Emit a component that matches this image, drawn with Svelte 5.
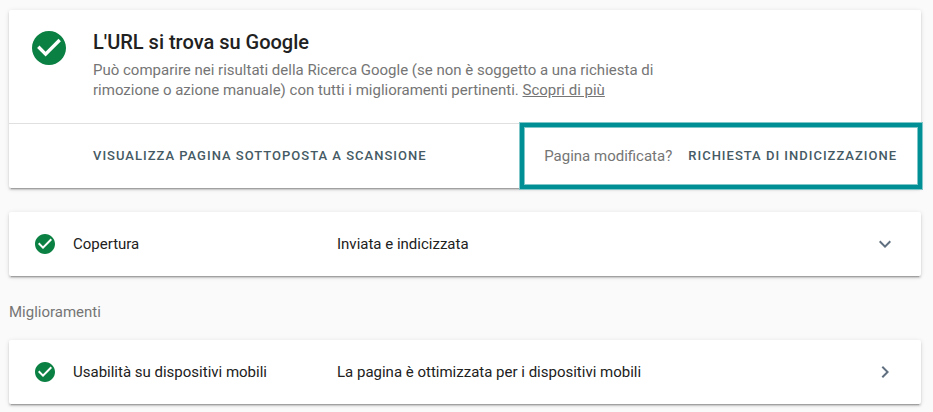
<script lang="ts">
	type Row = { name: string; status: string; open: string };

	const coverage: Row = {
		name: 'Copertura',
		status: 'Inviata e indicizzata',
		open: 'down'
	};
	const enhancements: Row[] = [
		{
			name: 'Usabilità su dispositivi mobili',
			status: 'La pagina è ottimizzata per i dispositivi mobili',
			open: 'right'
		}
	];
</script>

{#snippet check(size: string)}
	<svg class="check {size}" viewBox="2 2 20 20" aria-hidden="true">
		<path
			d="M12 2C6.48 2 2 6.48 2 12s4.48 10 10 10 10-4.48 10-10S17.52 2 12 2zm-2 15l-5-5 1.41-1.41L10 14.17l7.59-7.59L19 8l-9 9z"
		/>
	</svg>
{/snippet}

{#snippet row(item: Row)}
	<button type="button" class="card row">
		{@render check('small')}
		<span class="name">{item.name}</span>
		<span class="status">{item.status}</span>
		<svg class="chevron" viewBox="0 0 24 24" aria-hidden="true">
			{#if item.open === 'down'}
				<path d="M7.41 8.59L12 13.17l4.59-4.58L18 10l-6 6-6-6z" />
			{:else}
				<path d="M8.59 16.59L13.17 12 8.59 7.41 10 6l6 6-6 6z" />
			{/if}
		</svg>
	</button>
{/snippet}

<main>
	<section class="card">
		<div class="verdict">
			{@render check('large')}
			<div class="text">
				<h1>L'URL si trova su Google</h1>
				<p>
					Può comparire nei risultati della Ricerca Google (se non è soggetto a una richiesta di
					rimozione o azione manuale) con tutti i miglioramenti pertinenti.
					<a href="#more">Scopri di più</a>
				</p>
			</div>
		</div>
		<div class="actions">
			<button type="button" class="action">Visualizza pagina sottoposta a scansione</button>
			<div class="request">
				<span>Pagina modificata?</span>
				<button type="button" class="action">Richiesta di indicizzazione</button>
			</div>
		</div>
	</section>

	{@render row(coverage)}

	<h2>Miglioramenti</h2>
	{#each enhancements as item}
		{@render row(item)}
	{/each}
</main>

<style>
	:global(body) {
		background: #fafafa;
	}
	main {
		padding: 10px 12px 8px 9px;
		font-family: Roboto, sans-serif;
		font-size: 15px;
		line-height: 20px;
		color: #757575;
	}
	button {
		padding: 0;
		border: none;
		background: none;
		font: inherit;
		cursor: pointer;
	}
	.card {
		background: #fff;
		border-radius: 2px;
		box-shadow:
			0 2px 2px rgba(0, 0, 0, 0.14),
			0 3px 1px -2px rgba(0, 0, 0, 0.2),
			0 1px 5px rgba(0, 0, 0, 0.12);
	}
	.verdict {
		display: flex;
		align-items: flex-start;
		gap: 27px;
		padding: 20px 24px 23px 23px;
		border-bottom: 1px solid #e0e0e0;
	}
	.text {
		max-width: 580px;
	}
	h1 {
		margin: 0 0 6px;
		font-size: 20px;
		font-weight: 500;
		line-height: 24px;
		color: #212121;
	}
	p {
		margin: 0;
	}
	a {
		color: inherit;
	}
	.check {
		flex: none;
		fill: #0b8043;
	}
	.large {
		width: 34px;
		height: 34px;
		margin-top: 1px;
	}
	.small {
		width: 20px;
		height: 20px;
		margin-right: 18px;
	}
	.actions {
		display: flex;
		justify-content: space-between;
		align-items: center;
		height: 64px;
		padding-left: 84px;
	}
	.action {
		font-size: 13px;
		font-weight: 500;
		letter-spacing: 1px;
		text-transform: uppercase;
		white-space: nowrap;
		color: #455a64;
	}
	.request {
		position: relative;
		display: flex;
		align-items: center;
		gap: 16px;
		height: 100%;
		padding: 0 24px;
	}
	.request::after {
		content: '';
		position: absolute;
		inset: -1px -1px -1px 0;
		border: 4px solid #008f95;
		outline: 1px solid #80c7ca;
		box-shadow: inset 0 0 0 1px #80c7ca;
		pointer-events: none;
	}
	.row {
		display: flex;
		align-items: center;
		width: 100%;
		height: 64px;
		margin-top: 24px;
		padding: 0 24px 0 26px;
		text-align: left;
		color: #212121;
	}
	.name {
		width: 264px;
	}
	.status {
		flex: 1;
	}
	.chevron {
		width: 24px;
		height: 24px;
		fill: #607080;
	}
	h2 {
		margin: 26px 0 -6px;
		font-size: 15px;
		font-weight: 400;
		line-height: 20px;
	}
</style>
